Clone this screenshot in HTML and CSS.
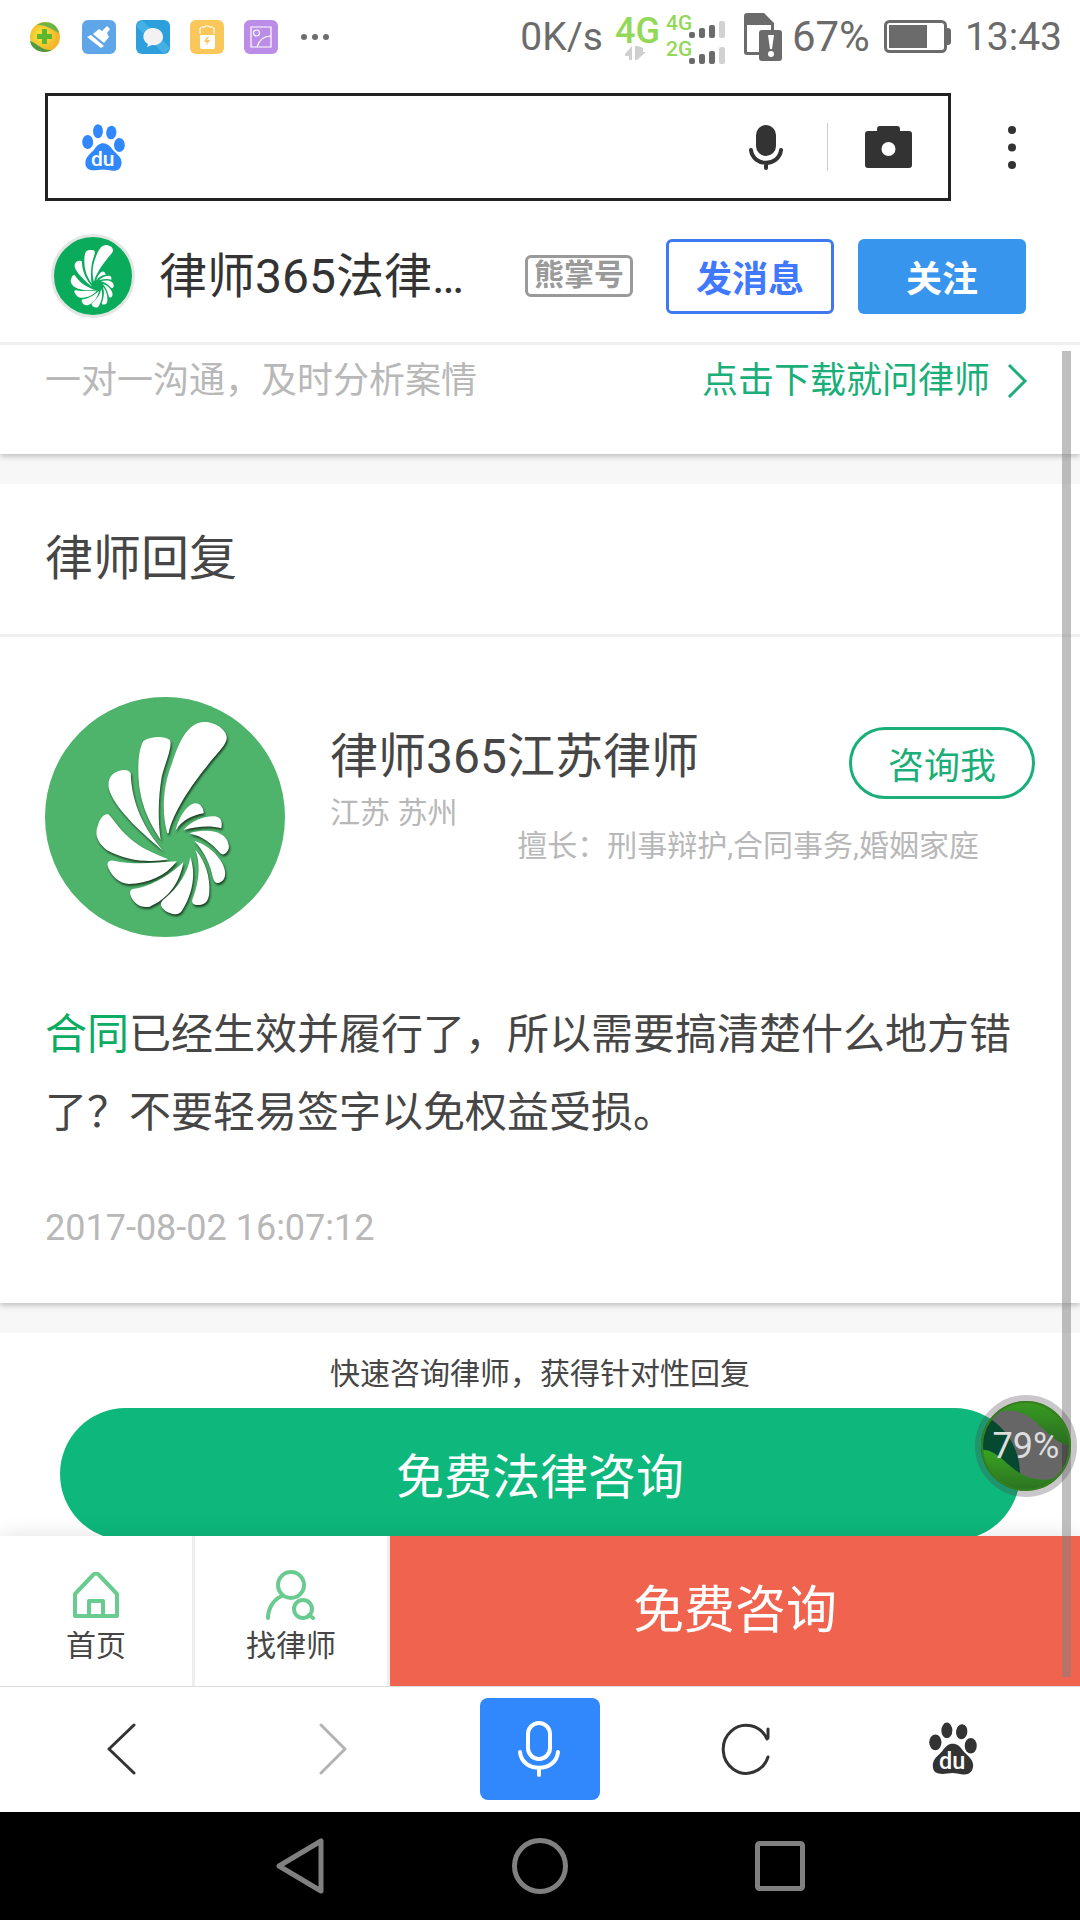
FILE: index.html
```html
<!DOCTYPE html>
<html lang="zh-CN">
<head>
<meta charset="utf-8">
<meta name="viewport" content="width=device-width, initial-scale=1">
<title>律师365法律咨询</title>
<link rel="stylesheet" href="styles.css">
</head>
<body>
<svg class="sprite" aria-hidden="true">
  <symbol id="paw" viewBox="0 0 43 47">
    <g fill="currentColor">
      <ellipse cx="16" cy="7.3" rx="4.9" ry="7"/>
      <ellipse cx="29.3" cy="8.5" rx="5.1" ry="6.8" transform="rotate(6 29.3 8.5)"/>
      <ellipse cx="5.7" cy="18" rx="5.5" ry="7"/>
      <ellipse cx="37.4" cy="21" rx="5.4" ry="6.9"/>
      <path d="M21.3 19.3C25 19.3 28 21.7 30.3 25.3C33.7 29.7 39.6 32.3 39.6 39C39 45 35.5 47.3 30.3 46.7C25 46 21.7 44.7 16.5 46C9.6 47 3.4 46.3 3.4 39C3.4 32.3 8.6 29.7 12 25.7C14.8 21.7 17.2 19.3 21.3 19.3Z"/>
    </g>
    <text x="20.7" y="42.3" text-anchor="middle" class="paw-text">du</text>
  </symbol>
  <symbol id="shell" viewBox="131 111 697 720" preserveAspectRatio="none">
    <path d="M486 520C470 460 472 380 500 310C520 245 545 190 590 186C625 184 665 212 658 240C650 265 625 285 600 320C560 370 500 460 490 520Z"/>
    <path d="M467 540C430 480 400 420 402 320C402 285 410 250 418 242C440 228 480 228 494 240C502 260 480 310 470 350C460 410 458 480 467 540Z"/>
    <path d="M475 573C400 510 330 440 316 385C312 355 325 340 345 333C360 328 374 328 380 340C382 430 420 510 475 573Z"/>
    <path d="M490 598C440 608 370 605 310 570C280 545 275 520 285 495C292 470 305 460 314 463C330 475 345 510 390 545C420 570 460 585 490 598Z"/>
    <path d="M514 604C450 608 390 615 330 602C312 600 308 612 318 630C330 655 350 670 375 672C430 670 480 650 514 604Z"/>
    <path d="M533 606C500 640 440 680 390 686C374 688 376 702 385 718C398 738 415 744 435 740C480 720 520 680 533 606Z"/>
    <path d="M553 592C545 640 520 680 480 715C462 728 465 740 480 752C500 765 520 768 530 750C560 700 570 640 553 592Z"/>
    <path d="M568 570C582 610 580 660 562 710C554 728 560 734 575 735C598 736 606 722 608 700C612 650 595 600 568 570Z"/>
    <path d="M565 543C595 575 612 620 618 650C622 670 632 674 645 664C660 650 656 625 640 600C620 570 595 552 565 543Z"/>
    <path d="M550 520C590 530 615 550 640 580C650 588 660 580 665 565C667 540 650 522 625 515C600 510 570 512 550 520Z"/>
    <path d="M533 510C560 480 600 465 630 470C645 475 646 490 643 505C610 495 570 500 533 510Z"/>
    <path d="M510 512C520 470 545 430 570 430C585 432 592 448 592 460C560 465 530 480 510 512Z"/>
  </symbol>
</svg>

<header class="top">
  <div class="status">
    <div class="status-apps">
      <svg width="34" height="34" viewBox="0 0 34 34">
        <defs><radialGradient id="gold" cx=".4" cy=".45"><stop offset="0" stop-color="#f9ec3c"/><stop offset="1" stop-color="#f3b62c"/></radialGradient></defs>
        <circle cx="17" cy="17" r="15" fill="url(#gold)"/>
        <path d="M9 5C15 0 29 1 31 13C27 12 21 5 9 5Z" fill="#6cb348"/>
        <path d="M2 21C9 23 14 31 24 30C17 34 4 32 2 21Z" fill="#4f9a3d"/>
        <path d="M14 9h5v5h5v5h-5v5h-5v-5h-5v-5h5z" fill="#5db531"/>
      </svg>
      <svg width="34" height="34" viewBox="0 0 34 34">
        <rect width="34" height="34" rx="6" fill="#5fa6e8"/>
        <path d="M11 14L17 9L20 11L25 6L28 9L25 13L27 17L22 23Z" fill="#fff"/>
        <path d="M9 15L22 26L19 28L5 17Z" fill="#fff"/>
      </svg>
      <svg width="34" height="34" viewBox="0 0 34 34">
        <rect width="34" height="34" rx="6" fill="#2e9fdd"/>
        <path d="M0 6L6 0L34 28L28 34Z" fill="#44b0e6"/>
        <path d="M17 8C23 8 27 12 27 17C27 22 22 26 16 25L11 27L12 24C4 19 7 8 17 8Z" fill="#f2f2f2"/>
      </svg>
      <svg width="34" height="34" viewBox="0 0 34 34">
        <rect width="34" height="34" rx="6" fill="#fac75a"/>
        <path d="M10 9Q10 7 12 7H15V6H19V7H22Q24 7 24 9" fill="none" stroke="#fff" stroke-width="1"/>
        <path d="M10 14V8M24 14V8" stroke="#fff" stroke-width="1"/>
        <path d="M10 15H25V27Q25 29 23 29H12Q10 29 10 27Z" fill="#fff"/>
        <path d="M17 17L14 22H17L16 26L20 20H17L19 17Z" fill="#fac75a"/>
      </svg>
      <svg width="34" height="34" viewBox="0 0 34 34">
        <rect width="34" height="34" rx="6" fill="#bb8de6"/>
        <g fill="none" stroke="#fff" stroke-width="1.2"><path d="M7 7H27V27H7Z"/><circle cx="12.500" cy="13" r="3"/><path d="M13 27C15 20 20 16 27 16"/></g>
      </svg>
      <svg width="34" height="34" viewBox="0 0 34 34" fill="#6e6e6e"><circle cx="6" cy="17" r="3"/><circle cx="17" cy="17" r="3"/><circle cx="28" cy="17" r="3"/></svg>
    </div>
    <div class="status-info">
      <div class="network">
        <span>0K/s</span>
        <svg width="115" height="56" viewBox="0 -4 115 56">
          <text x="0" y="30" class="net-large">4G</text>
          <path d="M10 41L17 33V47H14V43H10ZM20 33V47H22L31 39H28V35L23 33Z" fill="#cfcfcf"/>
          <text x="51" y="17" class="net-small">4G</text>
          <text x="51" y="43" class="net-small">2G</text>
          <g fill="#6b6b6b">
            <rect x="74" y="19" width="6" height="6" rx="2"/><rect x="84" y="15" width="6" height="10" rx="2"/><rect x="94" y="12" width="6" height="13" rx="2"/>
            <rect x="74" y="45" width="6" height="6" rx="2"/><rect x="84" y="41" width="6" height="10" rx="2"/><rect x="94" y="38" width="6" height="13" rx="2"/>
          </g>
          <g fill="#d2d2d2"><rect x="104" y="8" width="6" height="17" rx="2"/><rect x="104" y="34" width="6" height="17" rx="2"/></g>
        </svg>
      </div>
      <div class="power">
        <svg width="38" height="48" viewBox="0 0 38 48">
          <path d="M3 0H20L30 10V42H3Q0 42 0 39V3Q0 0 3 0ZM3 12V39H27V12Z" fill="#6b6b6b" fill-rule="evenodd"/>
          <rect x="15" y="17" width="23" height="31" rx="3" fill="#6b6b6b"/>
          <path d="M24 22H30L28 36H26Z" fill="#fff"/><circle cx="27" cy="41" r="3" fill="#fff"/>
        </svg>
        <span>67%</span>
      </div>
      <svg width="67" height="34" viewBox="0 0 67 34">
        <rect x="1.500" y="1.500" width="60" height="30" rx="4" fill="none" stroke="#6b6b6b" stroke-width="3"/>
        <rect x="5" y="5" width="38" height="23" fill="#6b6b6b"/>
        <path d="M62 8H64Q67 8 67 11V22Q67 25 64 25H62Z" fill="#6b6b6b"/>
      </svg>
      <time>13:43</time>
    </div>
  </div>

  <div class="search-row">
    <form class="search">
      <svg class="search-logo" width="43" height="47"><use href="#paw"/></svg>
      <input class="search-input" type="text" aria-label="搜索">
      <button class="icon-button" type="button" aria-label="语音搜索">
        <svg width="34" height="45" viewBox="0 0 34 45">
          <rect x="7" y="0" width="20" height="31" rx="10" fill="#333"/>
          <path d="M2 25C4 42 30 42 32 25M17 38V43" fill="none" stroke="#333" stroke-width="4" stroke-linecap="round"/>
        </svg>
      </button>
      <span class="search-divider"></span>
      <button class="icon-button" type="button" aria-label="拍照搜索">
        <svg width="47" height="42" viewBox="0 0 47 42">
          <path d="M12 5V3Q12 0 15 0H32Q35 0 35 3V5H44Q47 5 47 8V39Q47 42 44 42H3Q0 42 0 39V8Q0 5 3 5ZM23.500 16A7 7 0 1 0 23.500 30A7 7 0 1 0 23.500 16Z" fill="#333" fill-rule="evenodd"/>
        </svg>
      </button>
    </form>
    <button class="icon-button menu" type="button" aria-label="菜单">
      <svg width="8" height="43" viewBox="0 0 8 43" fill="#333"><circle cx="4" cy="4" r="4"/><circle cx="4" cy="21.500" r="4"/><circle cx="4" cy="39" r="4"/></svg>
    </button>
  </div>

  <div class="account">
    <svg class="account-avatar" width="84" height="84"><use href="#shell"/></svg>
    <strong class="account-name">律师365法律…</strong>
    <span class="badge">熊掌号</span>
    <button class="message" type="button">发消息</button>
    <button class="follow" type="button">关注</button>
  </div>
</header>

<div class="page">
  <main class="content">
    <section class="card tip">
      <p class="tip-text">一对一沟通，及时分析案情</p>
      <a class="tip-link" href="#">点击下载就问律师
        <svg width="21" height="34" viewBox="0 0 21 34"><path d="M2 1L18 17L2 33" fill="none" stroke="#1aae79" stroke-width="3"/></svg>
      </a>
    </section>

    <section class="card reply">
      <h1 class="reply-title">律师回复</h1>
      <div class="reply-body">
        <div class="lawyer">
          <svg class="lawyer-avatar" width="240" height="240"><use href="#shell"/></svg>
          <div class="lawyer-info">
            <h2 class="lawyer-name">律师365江苏律师</h2>
            <button class="ask" type="button">咨询我</button>
            <p class="lawyer-place">江苏 苏州</p>
            <p class="lawyer-skill">擅长：刑事辩护,合同事务,婚姻家庭</p>
          </div>
        </div>
        <p class="answer"><a class="keyword" href="#">合同</a>已经生效并履行了，所以需要搞清楚什么地方错了？不要轻易签字以免权益受损。</p>
        <time class="date">2017-08-02 16:07:12</time>
      </div>
    </section>

    <section class="quick">
      <p class="quick-text">快速咨询律师，获得针对性回复</p>
      <button class="quick-button" type="button">免费法律咨询</button>
    </section>
  </main>

  <nav class="cta">
    <a class="cta-tab" href="#">
      <svg width="46" height="48" viewBox="0 0 46 48" fill="none" stroke="#6acb90" stroke-width="4" stroke-linejoin="round"><path d="M2 22L20 3Q23 0 26 3L44 22V44H2Z"/><path d="M16 44V29H30V44"/></svg>
      首页
    </a>
    <a class="cta-tab" href="#">
      <svg width="50" height="50" viewBox="0 0 50 50" fill="none" stroke="#6acb90" stroke-width="4" stroke-linecap="round"><circle cx="25" cy="15" r="13"/><path d="M2 48C2 38 8 29 16 26"/><circle cx="37" cy="39" r="9"/><path d="M43 45L47 48"/></svg>
      找律师
    </a>
    <a class="cta-main" href="#">免费咨询</a>
  </nav>

  <div class="scrollbar"></div>
  <div class="ball">
    <svg class="ball-art" width="102" height="102" viewBox="0 0 102 102">
      <defs>
        <clipPath id="ball-clip"><circle cx="51" cy="51" r="44"/></clipPath>
        <linearGradient id="leaf" x1="0" y1="0" x2="0" y2="1"><stop offset="0" stop-color="#38a321"/><stop offset="1" stop-color="#2b6a22"/></linearGradient>
      </defs>
      <circle cx="51" cy="51" r="48" fill="none" stroke="#504650" stroke-opacity=".3" stroke-width="6"/>
      <circle cx="51" cy="51" r="45" fill="#000" fill-opacity=".6"/>
      <g clip-path="url(#ball-clip)">
        <path d="M4 40C12 14 36 10 54 22C72 34 76 48 100 52V0H4Z" fill="url(#leaf)"/>
        <path d="M4 55C30 52 36 90 76 84C86 82 92 78 96 74V102H4Z" fill="url(#leaf)"/>
      </g>
      <circle cx="51" cy="51" r="44" fill="none" stroke="#35801f" stroke-width="2"/>
    </svg>
    <span class="ball-text">79%</span>
  </div>
</div>

<footer>
  <nav class="toolbar">
    <button class="icon-button" type="button" aria-label="后退"><svg width="40" height="52" viewBox="0 0 40 52"><path d="M27 2L2 26L27 50" fill="none" stroke="#333" stroke-width="3" stroke-linecap="round" stroke-linejoin="round"/></svg></button>
    <button class="icon-button" type="button" aria-label="前进" disabled><svg width="30" height="52" viewBox="0 0 30 52"><path d="M2 2L26 26L2 50" fill="none" stroke="#b4b4b4" stroke-width="3" stroke-linecap="round" stroke-linejoin="round"/></svg></button>
    <button class="voice" type="button" aria-label="语音">
      <svg width="46" height="56" viewBox="0 0 46 56" fill="none" stroke="#fff" stroke-width="4" stroke-linecap="round"><rect x="11" y="2" width="22" height="36" rx="11"/><path d="M3 31C5 52 39 52 41 31M22 47V54"/></svg>
    </button>
    <button class="icon-button" type="button" aria-label="刷新"><svg width="50" height="54" viewBox="0 0 50 54"><path d="M46 17A23 24 0 1 0 47 35M47 7V16" fill="none" stroke="#333" stroke-width="3" stroke-linecap="round"/></svg></button>
    <button class="icon-button paw-dark" type="button" aria-label="首页"><svg width="48" height="53"><use href="#paw"/></svg></button>
  </nav>
  <nav class="system">
    <button class="icon-button" type="button" aria-label="返回"><svg width="50" height="56" viewBox="0 0 50 56"><path d="M46 3V53L4 28Z" fill="none" stroke="#808080" stroke-width="5" stroke-linejoin="round"/></svg></button>
    <button class="icon-button" type="button" aria-label="主屏幕"><svg width="56" height="56" viewBox="0 0 56 56"><circle cx="28" cy="28" r="25.500" fill="none" stroke="#808080" stroke-width="5"/></svg></button>
    <button class="icon-button" type="button" aria-label="最近任务"><svg width="50" height="50" viewBox="0 0 50 50"><rect x="2.500" y="2.500" width="45" height="45" rx="2" fill="none" stroke="#808080" stroke-width="5"/></svg></button>
  </nav>
</footer>
</body>
</html>
```
FILE: styles.css
```css
* {
  box-sizing: border-box;
}

body {
  display: flex;
  flex-direction: column;
  height: 100vh;
  margin: 0;
  background: #fff;
  color: #464646;
  font-family: Roboto, "Noto Sans CJK SC", sans-serif;
  font-size: 36px;
}

p, h1, h2 {
  margin: 0;
  font-weight: 400;
}

svg {
  display: block;
  flex: none;
}

a {
  color: inherit;
  text-decoration: none;
}

button {
  padding: 0;
  border: 0;
  background: none;
  color: inherit;
  font: inherit;
}

.sprite {
  position: absolute;
  width: 0;
  height: 0;
}

.icon-button {
  display: flex;
  align-items: center;
  justify-content: center;
}

/* Status bar */

.status {
  display: flex;
  align-items: center;
  justify-content: space-between;
  height: 75px;
  padding: 0 18px 2px 28px;
  color: #6b6b6b;
  font-size: 39px;
}

.status-apps {
  display: flex;
  gap: 20px;
}

.status-info {
  display: flex;
  align-items: center;
  gap: 14px;
}

.network {
  display: flex;
  align-items: center;
  gap: 12px;
}

.power {
  display: flex;
  align-items: center;
  gap: 10px;
  font-size: 42px;
}

.net-large {
  fill: #93d858;
  font-size: 36px;
  font-weight: 500;
}

.net-small {
  fill: #93d858;
  font-size: 21px;
  font-weight: 500;
}

.paw-text {
  fill: #fff;
  font-size: 21px;
  font-weight: 500;
}

/* Search */

.search-row {
  display: flex;
  padding: 18px 7px 0 45px;
}

.search {
  display: flex;
  flex: 1;
  align-items: center;
  height: 108px;
  padding: 0 36px 0 34px;
  border: 3px solid #222;
}

.search-logo {
  color: #3088fc;
}

.search-input {
  flex: 1;
  min-width: 0;
  height: 80px;
  border: 0;
  outline: 0;
  background: none;
  font: inherit;
}

.search-divider {
  width: 1px;
  height: 48px;
  margin: 0 37px 0 44px;
  background: #ccc;
}

.menu {
  width: 122px;
}

/* Account */

.account {
  display: flex;
  align-items: center;
  padding: 33px 54px 24px 51px;
  border-bottom: 3px solid #f0f0f0;
}

.account-avatar {
  border: 3px solid #e4e6e4;
  border-radius: 50%;
  background: #0aac5c;
  fill: #fff;
}

.account-name {
  margin: 0 auto 0 24px;
  padding-bottom: 8px;
  color: #333;
  font-size: 48px;
  font-weight: 400;
}

.badge {
  height: 42px;
  margin-right: 33px;
  padding: 0 6px;
  border: 3px solid #9a9a9a;
  border-radius: 6px;
  color: #9a9a9a;
  font-size: 30px;
  font-weight: 700;
  line-height: 34px;
}

.message,
.follow {
  width: 168px;
  height: 75px;
  border-radius: 6px;
  font-weight: 700;
}

.message {
  margin-right: 24px;
  border: 3px solid #4078f0;
  color: #4078ff;
}

.follow {
  background: #3895ee;
  color: #fff;
}

/* Page */

.page {
  position: relative;
  display: flex;
  flex: 1;
  flex-direction: column;
  min-height: 0;
}

.content {
  flex: 1;
  min-height: 0;
  overflow: hidden;
  background: #f7f7f7;
}

.card {
  margin-bottom: 30px;
  background: #fff;
  box-shadow: 0 2px 6px rgba(0, 0, 0, .25);
  clip-path: inset(0 0 -12px 0);
}

.tip {
  display: flex;
  justify-content: space-between;
  padding: 12px 52px 49px 45px;
  line-height: 48px;
}

.tip-text {
  color: #b8b8b8;
}

.tip-link {
  display: flex;
  align-items: center;
  gap: 17px;
  color: #1aae79;
}

.reply-title {
  padding: 45px;
  border-bottom: 3px solid #f0f0f0;
  font-size: 48px;
  line-height: 60px;
}

.reply-body {
  padding: 60px 45px 51px;
}

.lawyer {
  display: flex;
  gap: 45px;
}

.lawyer-avatar {
  border-radius: 50%;
  background: #4eb36b;
  fill: #fff;
}

.lawyer-avatar use {
  filter: drop-shadow(1px 2px 1px rgba(0, 0, 0, .65));
}

.lawyer-info {
  display: grid;
  flex: 1;
  grid-template-columns: 1fr auto;
  grid-template-rows: 69px 33px 33px;
  padding-top: 30px;
}

.lawyer-name {
  font-size: 48px;
  line-height: 60px;
}

.ask {
  grid-row: 1 / 3;
  grid-column: 2;
  width: 186px;
  height: 72px;
  border: 3px solid #1aae79;
  border-radius: 36px;
  color: #1aae79;
}

.lawyer-place,
.lawyer-skill {
  color: #b8b8b8;
  font-size: 30px;
  line-height: 33px;
}

.lawyer-skill {
  grid-column: 1 / 3;
  padding-right: 56px;
  text-align: right;
}

.answer {
  margin-top: 59px;
  font-size: 42px;
  line-height: 78px;
}

.keyword {
  color: #0cac62;
}

.date {
  display: block;
  margin-top: 52px;
  color: #b8b8b8;
  line-height: 48px;
}

.quick {
  padding: 18px 60px 30px;
  background: #fff;
  text-align: center;
}

.quick-text {
  font-size: 30px;
  line-height: 45px;
}

.quick-button {
  width: 100%;
  height: 132px;
  margin-top: 12px;
  padding-bottom: 3px;
  border-radius: 66px;
  background: #0eb77b;
  color: #fff;
  font-size: 48px;
}

/* Bottom bar of the page */

.cta {
  position: relative;
  display: flex;
  height: 150px;
  background: #fff;
  box-shadow: 0 0 20px rgba(0, 0, 0, .12);
}

.cta-tab {
  display: flex;
  flex: none;
  flex-direction: column;
  align-items: center;
  justify-content: flex-end;
  gap: 6px;
  width: 195px;
  padding-bottom: 20px;
  border-right: 3px solid #eee;
  font-size: 30px;
  line-height: 40px;
}

.cta-main {
  display: flex;
  flex: 1;
  align-items: center;
  justify-content: center;
  padding-bottom: 10px;
  background: #f0644f;
  color: #fff;
  font-size: 51px;
}

.scrollbar {
  position: absolute;
  top: 6px;
  right: 9px;
  bottom: 9px;
  width: 9px;
  background: rgba(128, 128, 128, .5);
}

.ball {
  position: absolute;
  right: 3px;
  bottom: 189px;
  display: grid;
  place-items: center;
  width: 102px;
  height: 102px;
  color: #ddd;
}

.ball-art,
.ball-text {
  grid-area: 1 / 1;
}

/* Browser and system bars */

.toolbar {
  position: relative;
  display: grid;
  grid-template-columns: repeat(5, 1fr);
  place-items: center;
  height: 126px;
  padding: 0 24px 2px;
  border-top: 1px solid #ddd;
  background: #fff;
}

.voice {
  display: flex;
  align-items: center;
  justify-content: center;
  width: 120px;
  height: 102px;
  border-radius: 8px;
  background: #3088fc;
}

.paw-dark {
  color: #333;
}

.system {
  display: flex;
  align-items: center;
  justify-content: center;
  gap: 187px;
  height: 108px;
  background: #000;
}
```
